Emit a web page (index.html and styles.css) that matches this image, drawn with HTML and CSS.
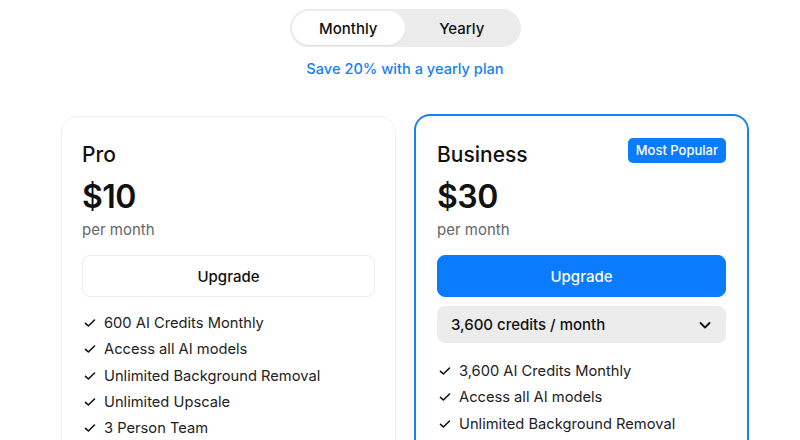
FILE: index.html
```html
<!DOCTYPE html>
<html lang="en">
<head>
    <meta charset="UTF-8">
    <meta name="viewport" content="width=device-width, initial-scale=1.0">
    <title>Pricing</title>
    <link rel="stylesheet" href="styles.css">
</head>
<body>
    <div class="page">
        <div class="billing">
            <div class="toggle">
                <button class="toggle-option active">Monthly</button>
                <button class="toggle-option">Yearly</button>
            </div>
            <p class="save-note">Save 20% with a yearly plan</p>
        </div>

        <div class="plans">
            <div class="plan">
                <div class="plan-head">
                    <h2 class="plan-name">Pro</h2>
                </div>
                <div class="plan-price">$10</div>
                <div class="plan-period">per month</div>
                <button class="upgrade-btn">Upgrade</button>
                <ul class="features">
                    <li><svg class="check" viewBox="0 0 12 12"><path d="M1.5 6.3 4.4 9 10.5 3"/></svg>600 AI Credits Monthly</li>
                    <li><svg class="check" viewBox="0 0 12 12"><path d="M1.5 6.3 4.4 9 10.5 3"/></svg>Access all AI models</li>
                    <li><svg class="check" viewBox="0 0 12 12"><path d="M1.5 6.3 4.4 9 10.5 3"/></svg>Unlimited Background Removal</li>
                    <li><svg class="check" viewBox="0 0 12 12"><path d="M1.5 6.3 4.4 9 10.5 3"/></svg>Unlimited Upscale</li>
                    <li><svg class="check" viewBox="0 0 12 12"><path d="M1.5 6.3 4.4 9 10.5 3"/></svg>3 Person Team</li>
                </ul>
            </div>

            <div class="plan featured">
                <div class="plan-head">
                    <h2 class="plan-name">Business</h2>
                    <span class="badge">Most Popular</span>
                </div>
                <div class="plan-price">$30</div>
                <div class="plan-period">per month</div>
                <button class="upgrade-btn primary">Upgrade</button>
                <div class="credits-select">
                    <span>3,600 credits / month</span>
                    <svg class="chevron" viewBox="0 0 14 14"><path d="M2.5 5 7 9.5 11.5 5"/></svg>
                </div>
                <ul class="features">
                    <li><svg class="check" viewBox="0 0 12 12"><path d="M1.5 6.3 4.4 9 10.5 3"/></svg>3,600 AI Credits Monthly</li>
                    <li><svg class="check" viewBox="0 0 12 12"><path d="M1.5 6.3 4.4 9 10.5 3"/></svg>Access all AI models</li>
                    <li><svg class="check" viewBox="0 0 12 12"><path d="M1.5 6.3 4.4 9 10.5 3"/></svg>Unlimited Background Removal</li>
                    <li><svg class="check" viewBox="0 0 12 12"><path d="M1.5 6.3 4.4 9 10.5 3"/></svg>Unlimited Upscale</li>
                    <li><svg class="check" viewBox="0 0 12 12"><path d="M1.5 6.3 4.4 9 10.5 3"/></svg>10 Person Team</li>
                </ul>
            </div>
        </div>
    </div>
</body>
</html>
```

FILE: styles.css
```css
body {
    font-family: Inter, "Noto Sans", sans-serif;
    margin: 0;
    background-color: #ffffff;
    color: #111111;
    overflow: hidden;
}

.page {
    padding: 9px 0 0 10px;
}

.billing {
    display: flex;
    flex-direction: column;
    align-items: center;
}

.toggle {
    display: flex;
    background-color: #ececec;
    border-radius: 20px;
    padding: 2px;
    width: 231px;
    box-sizing: border-box;
}

.toggle-option {
    flex: 1;
    height: 34px;
    border: none;
    border-radius: 17px;
    background: none;
    font-family: inherit;
    font-size: 15px;
    font-weight: 500;
    color: #111111;
    cursor: pointer;
}

.toggle-option.active {
    background-color: #ffffff;
    box-shadow: 0 1px 2px rgba(0, 0, 0, 0.06);
}

.save-note {
    margin: 13px 0 0;
    font-size: 14.6px;
    font-weight: 500;
    color: #1a7ff2;
}

.plans {
    display: flex;
    justify-content: center;
    gap: 18px;
    margin-top: 36px;
}

.plan {
    width: 335px;
    box-sizing: border-box;
    border: 1px solid #f0f0f0;
    border-radius: 16px;
    padding: 23px 20px 20px;
    margin-top: 2px;
    background-color: #ffffff;
}

.plan.featured {
    border: 2.5px solid #1a7ff2;
    padding: 24px 21px 20px;
    margin-top: 0;
    height: 400px;
}

.plan-head {
    display: flex;
    justify-content: space-between;
    align-items: flex-start;
    height: 30px;
}

.plan-name {
    margin: 0;
    font-size: 21px;
    font-weight: 500;
    line-height: 30px;
}

.badge {
    background-color: #0b7bff;
    color: #ffffff;
    font-size: 13px;
    font-weight: 500;
    padding: 4px 8px;
    border-radius: 5px;
    line-height: 17px;
    margin-top: -2px;
}

.plan-price {
    margin-top: 7px;
    font-size: 32px;
    font-weight: 600;
    line-height: 40px;
    letter-spacing: -0.5px;
}

.plan-period {
    margin-top: 3px;
    font-size: 15px;
    color: #666666;
    line-height: 20px;
}

.upgrade-btn {
    display: block;
    width: 100%;
    height: 42px;
    margin-top: 15px;
    border: 1px solid #ededed;
    border-radius: 8px;
    background-color: #ffffff;
    font-family: inherit;
    font-size: 15px;
    font-weight: 500;
    color: #111111;
    cursor: pointer;
}

.upgrade-btn.primary {
    background-color: #0b7bff;
    border-color: #0b7bff;
    color: #ffffff;
}

.credits-select {
    display: flex;
    justify-content: space-between;
    align-items: center;
    height: 37px;
    margin-top: 9px;
    padding: 0 14px;
    background-color: #ececec;
    border-radius: 8px;
    font-size: 15px;
    font-weight: 500;
}

.chevron {
    width: 14px;
    height: 14px;
    fill: none;
    stroke: #111111;
    stroke-width: 1.8;
    stroke-linecap: round;
    stroke-linejoin: round;
}

.features {
    list-style: none;
    margin: 13px 0 0;
    padding: 0;
}

.featured .features {
    margin-top: 15px;
}

.features li {
    display: flex;
    align-items: center;
    gap: 8px;
    height: 26.3px;
    font-size: 14.7px;
    color: #222222;
    padding-left: 2px;
}

.check {
    width: 12px;
    height: 12px;
    fill: none;
    stroke: #111111;
    stroke-width: 1.6;
    stroke-linecap: round;
    stroke-linejoin: round;
}
```
